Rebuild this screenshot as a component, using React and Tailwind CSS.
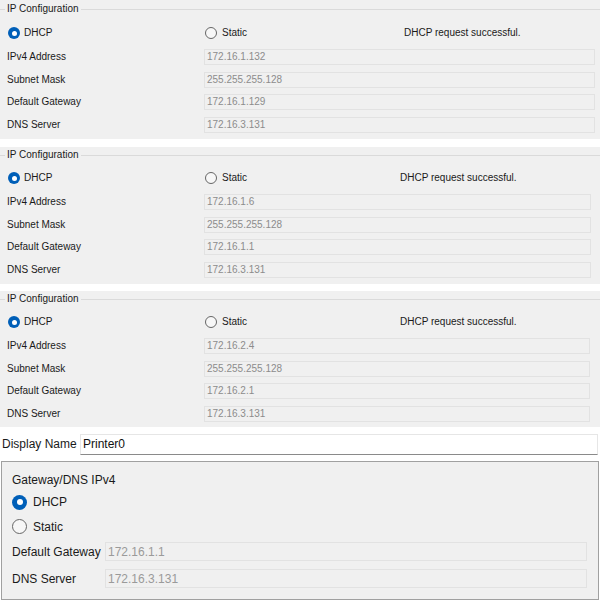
import React from "react";

function Radio({ checked, big }) {
  if (big) {
    return checked ? (
      <span className="w-[15px] h-[15px] rounded-full bg-[#005fb8] flex items-center justify-center shrink-0">
        <span className="w-[6px] h-[6px] rounded-full bg-white" />
      </span>
    ) : (
      <span className="w-[15px] h-[15px] rounded-full border border-[#666] bg-[#f7f7f7] shrink-0" />
    );
  }
  return checked ? (
    <span className="w-[12px] h-[12px] rounded-full bg-[#005fb8] flex items-center justify-center shrink-0">
      <span className="w-[5px] h-[5px] rounded-full bg-white" />
    </span>
  ) : (
    <span className="w-[12px] h-[12px] rounded-full border border-[#666] bg-[#f7f7f7] shrink-0" />
  );
}

function FieldRow({ label, value, mr }) {
  return (
    <div className="flex items-center h-[22.5px]">
      <div className="w-[204px] shrink-0 pl-[7px] text-[#1a1a1a]">{label}</div>
      <div className={`flex-1 ${mr} h-[16px] border border-[#e2e2e2] flex items-center pl-[2px] text-[#8c8c8c]`}>
        {value}
      </div>
    </div>
  );
}

function IPPanel({ hCls, pt, mt, mr, msgW, ip, mask, gw, dns }) {
  return (
    <div className={`bg-[#f0f0f0] ${hCls} ${pt} text-[10px] leading-none shrink-0`}>
      <div className="h-[16px] flex items-center">
        <span className="w-[5px] h-px bg-[#dadada]" />
        <span className="px-[2px] text-[#1a1a1a]">IP Configuration</span>
        <span className="flex-1 h-px bg-[#dadada]" />
      </div>
      <div className={`flex items-center h-[20px] ${mt} text-[#1a1a1a]`}>
        <div className="w-[204px] shrink-0 pl-[8px] flex items-center gap-[4px]">
          <Radio checked />
          <span>DHCP</span>
        </div>
        <div className={`${msgW} shrink-0 pl-[1px] flex items-center gap-[5px]`}>
          <Radio />
          <span>Static</span>
        </div>
        <div className="shrink-0">DHCP request successful.</div>
      </div>
      <div className="mt-[3px]">
        <FieldRow label="IPv4 Address" value={ip} mr={mr} />
        <FieldRow label="Subnet Mask" value={mask} mr={mr} />
        <FieldRow label="Default Gateway" value={gw} mr={mr} />
        <FieldRow label="DNS Server" value={dns} mr={mr} />
      </div>
    </div>
  );
}

export default function App() {
  return (
    <div
      className="w-[600px] h-[600px] bg-white overflow-hidden flex flex-col"
      style={{ fontFamily: '"Liberation Sans", Arial, sans-serif' }}
    >
      <IPPanel hCls="h-[139px]" pt="pt-[1px]" mt="mt-[6px]" mr="mr-[5px]" msgW="w-[200px]" ip="172.16.1.132" mask="255.255.255.128" gw="172.16.1.129" dns="172.16.3.131" />
      <div className="h-[8px] shrink-0" />
      <IPPanel hCls="h-[137px]" pt="pt-0" mt="mt-[5px]" mr="mr-[9px]" msgW="w-[196px]" ip="172.16.1.6" mask="255.255.255.128" gw="172.16.1.1" dns="172.16.3.131" />
      <div className="h-[7px] shrink-0" />
      <IPPanel hCls="h-[136px]" pt="pt-0" mt="mt-[5px]" mr="mr-[10px]" msgW="w-[196px]" ip="172.16.2.4" mask="255.255.255.128" gw="172.16.2.1" dns="172.16.3.131" />
      <div className="h-[4px] shrink-0" />
      <div className="flex items-center h-[26px] text-[12px] leading-none shrink-0">
        <div className="w-[80px] pl-[2px] text-[#1a1a1a]">Display Name</div>
        <div className="flex-1 mr-[2px] h-[21px] bg-white border border-[#e6e6e6] border-b-[#8a8a8a] flex items-center pl-[2px] text-[#111]">
          Printer0
        </div>
      </div>
      <div className="mt-[4px] mx-[1px] flex-1 border border-[#a0a0a0] bg-[#f0f0f0] pl-[10px] pt-[9px] text-[12px] leading-none text-[#1a1a1a]">
        <div className="h-[18px] flex items-center">Gateway/DNS IPv4</div>
        <div className="h-[26px] flex items-center gap-[6px]">
          <Radio checked big />
          <span>DHCP</span>
        </div>
        <div className="h-[23px] flex items-center gap-[6px]">
          <Radio big />
          <span>Static</span>
        </div>
        <div className="h-[27px] flex items-center">
          <div className="w-[93px]">Default Gateway</div>
          <div className="flex-1 mr-[11px] h-[19px] border border-[#e2e2e2] flex items-center pl-[2px] text-[#9a9a9a]">
            172.16.1.1
          </div>
        </div>
        <div className="h-[27px] flex items-center">
          <div className="w-[93px]">DNS Server</div>
          <div className="flex-1 mr-[11px] h-[19px] border border-[#e2e2e2] flex items-center pl-[2px] text-[#9a9a9a]">
            172.16.3.131
          </div>
        </div>
      </div>
    </div>
  );
}
